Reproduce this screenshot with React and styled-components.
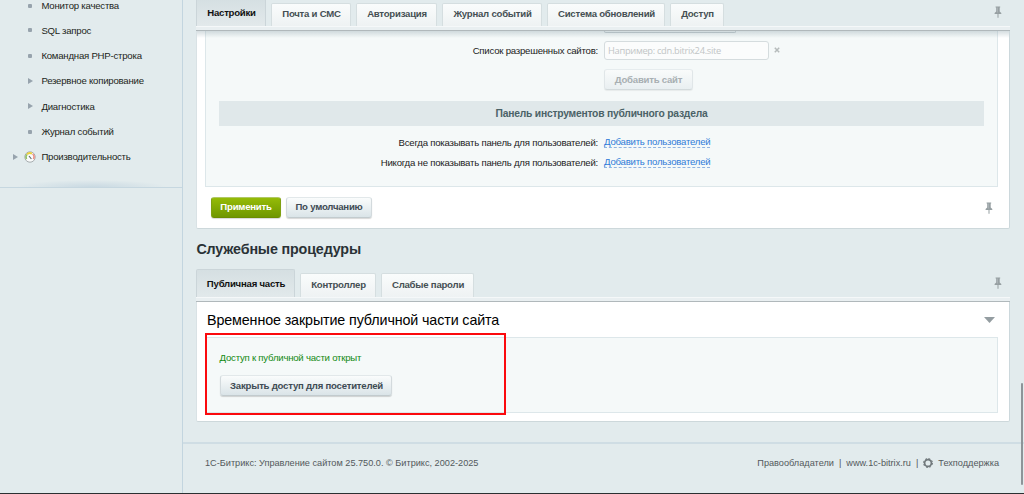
import React from 'react'
import styled, { createGlobalStyle } from 'styled-components'

const menu = [
  { text: 'Монитор качества', mark: 'dot' },
  { text: 'SQL запрос', mark: 'dot' },
  { text: 'Командная PHP-строка', mark: 'dot' },
  { text: 'Резервное копирование', mark: 'arrow' },
  { text: 'Диагностика', mark: 'arrow' },
  { text: 'Журнал событий', mark: 'dot' },
]

const settingsTabs = [
  { text: 'Настройки', width: 70, active: true },
  { text: 'Почта и СМС', width: 80 },
  { text: 'Авторизация', width: 81 },
  { text: 'Журнал событий', width: 100 },
  { text: 'Система обновлений', width: 118 },
  { text: 'Доступ', width: 54 },
]

const serviceTabs = [
  { text: 'Публичная часть', width: 99, active: true },
  { text: 'Контроллер', width: 76 },
  { text: 'Слабые пароли', width: 93 },
]

const Pin = () => (
  <svg width="8" height="13" viewBox="0 0 8 13">
    <path d="M1.6 .5h4.6v1H5.7v4l1.6 1.5v1H.6V7l1.6-1.5v-4h-.6z" fill="#969fa2" />
    <path d="M3 1.5h1v5H3z" fill="#a9b1b4" />
    <path d="M3.5 8h1v3.7h-1z" fill="#969fa2" />
  </svg>
)

const Gauge = () => (
  <svg width="12" height="12" viewBox="0 0 12 12">
    <circle cx="6" cy="6" r="5.2" fill="#fafbfb" stroke="#a5abae" strokeWidth="1" />
    <path d="M2.6 8A3.9 3.9 0 0 1 3 3.4" fill="none" stroke="#8fbf62" strokeWidth="1.5" />
    <path d="M3 3.4A4 4 0 0 1 8 2.6" fill="none" stroke="#ecd23e" strokeWidth="2" />
    <path d="M8.6 3A4 4 0 0 1 9.4 8" fill="none" stroke="#ee8f86" strokeWidth="1.6" />
    <path d="M5 5 7.4 8" stroke="#59646a" strokeWidth="1.1" />
  </svg>
)

const Gear = () => (
  <svg width="10" height="10" viewBox="0 0 10 10">
    <circle cx="5" cy="5" r="3.4" fill="none" stroke="#71797c" strokeWidth="1.7" />
    <circle cx="5" cy="5" r="4.5" fill="none" stroke="#71797c" strokeWidth="1" strokeDasharray="1.9 1.63" />
  </svg>
)

const Tabs = ({ items, service }) => (
  <TabBar $service={service}>
    {items.map((tab) => (
      <Tab key={tab.text} $width={tab.width} $active={tab.active} $service={service}>
        {tab.text}
      </Tab>
    ))}
    <PinSlot>
      <Pin />
    </PinSlot>
  </TabBar>
)

const App = () => (
  <Page>
    <GlobalStyle />
    <Sidebar>
      {menu.map((item) => (
        <MenuItem key={item.text}>
          <Mark>{item.mark === 'dot' ? <Dot /> : <Arrow />}</Mark>
          {item.text}
        </MenuItem>
      ))}
      <MenuItem $root>
        <Arrow />
        <Mark $icon>
          <Gauge />
        </Mark>
        Производительность
      </MenuItem>
      <SidebarEnd />
    </Sidebar>

    <Main>
      <Section>
        <Tabs items={settingsTabs} />
        <Band />
        <Panel $height={198}>
          <Shade />
          <Box $height={156}>
            <SelectEdge />
            <Row $height={20} $top={7}>
              <Label>Список разрешенных сайтов:</Label>
              <Input placeholder="Например: cdn.bitrix24.site" />
              <svg width="6" height="6" viewBox="0 0 6 6">
                <path d="M.8.8l4.4 4.4M5.2.8L.8 5.2" stroke="#b5bbbb" strokeWidth="1.5" />
              </svg>
            </Row>
            <Row $height={21} $top={9}>
              <Label />
              <Button $width={89} disabled>
                Добавить сайт
              </Button>
            </Row>
            <GroupTitle>Панель инструментов публичного раздела</GroupTitle>
            <Row $height={20} $top={6}>
              <Label>Всегда показывать панель для пользователей:</Label>
              <Link>Добавить пользователей</Link>
            </Row>
            <Row $height={20}>
              <Label>Никогда не показывать панель для пользователей:</Label>
              <Link>Добавить пользователей</Link>
            </Row>
          </Box>
          <Actions>
            <Button $width={70} $green>
              Применить
            </Button>
            <Button $width={86}>По умолчанию</Button>
            <PinSlot $inner>
              <Pin />
            </PinSlot>
          </Actions>
        </Panel>
      </Section>

      <Title>Служебные процедуры</Title>

      <Section>
        <Tabs items={serviceTabs} service />
        <Band />
        <Panel $height={120}>
          <PanelHead>
            Временное закрытие публичной части сайта
            <svg width="11" height="6" viewBox="0 0 11 6">
              <path d="M0 0h11L5.5 6z" fill="#949da1" />
            </svg>
          </PanelHead>
          <Box $height={76} $framed>
            <Status>Доступ к публичной части открыт</Status>
            <Button $width={172} $left>
              Закрыть доступ для посетителей
            </Button>
            <Highlight />
          </Box>
        </Panel>
      </Section>

      <Footer>
        <span>1С-Битрикс: Управление сайтом 25.750.0. © Битрикс, 2002-2025</span>
        <FooterLinks>
          <span>Правообладатели</span>
          <span>|</span>
          <span>www.1c-bitrix.ru</span>
          <span>|</span>
          <Gear />
          <span>Техподдержка</span>
        </FooterLinks>
      </Footer>
    </Main>
    <Scrollbar />
  </Page>
)

export default App

const GlobalStyle = createGlobalStyle`
  * {
    box-sizing: border-box;
  }
  body {
    margin: 0;
    overflow: hidden;
    font-family: 'Liberation Sans', Arial, sans-serif;
  }
`

const Page = styled.div`
  position: relative;
  display: flex;
  width: 1024px;
  height: 494px;
  overflow: hidden;
  background: #e2ebed;
  border-bottom: 1px solid #2b2f31;
  white-space: nowrap;
`

const Sidebar = styled.div`
  width: 183px;
  flex-shrink: 0;
  border-right: 1px solid #c3d5df;
`

const MenuItem = styled.div`
  display: flex;
  align-items: center;
  height: 25.3px;
  padding-left: ${({ $root }) => ($root ? '13px' : '27px')};
  font-size: 9.6px;
  letter-spacing: -0.22px;
  color: #1c1f20;
  &:first-child {
    height: 18px;
    margin-top: -3.5px;
    margin-bottom: 3.2px;
  }
`

const Mark = styled.span`
  display: flex;
  width: 14.4px;
  padding-left: 1px;
  ${({ $icon }) => $icon && `
    width: 17.4px;
    margin-left: 6px;
    padding-left: 0;
  `}
`

const Dot = styled.i`
  width: 4px;
  height: 4px;
  border-radius: 1px;
  background: #97a3ad;
`

const Arrow = styled.i`
  border-left: 5px solid #97a3ad;
  border-top: 3px solid transparent;
  border-bottom: 3px solid transparent;
`

const SidebarEnd = styled.div`
  height: 19px;
  border-bottom: 1px solid #c6d7e0;
  background: radial-gradient(ellipse 75px 7px at 92px 100%, #c9d9e2, transparent);
`

const Main = styled.div`
  flex: 1;
  display: flex;
  flex-direction: column;
`

const Section = styled.div`
  width: 814px;
  margin-left: 13px;
`

const TabBar = styled.div`
  display: flex;
  align-items: flex-end;
  gap: 5px;
  height: ${({ $service }) => ($service ? '28px' : '26px')};
`

const Tab = styled.div`
  display: flex;
  align-items: center;
  justify-content: center;
  width: ${({ $width }) => $width}px;
  height: ${({ $active, $service }) => ($active ? 28 : $service ? 24 : 23)}px;
  flex-shrink: 0;
  padding-left: 1px;
  padding-bottom: ${({ $active, $service }) => ($active ? 0 : $service ? 2 : 3)}px;
  border: 1px solid ${({ $active }) => ($active ? '#cbd5d9' : '#d5dee0')};
  border-bottom: 0;
  border-radius: 2px 2px 0 0;
  background: ${({ $active }) => ($active
    ? 'linear-gradient(#d5dfe2, #e2e9eb)'
    : 'linear-gradient(#fafcfc, #eef2f3)')};
  font-size: 9.6px;
  letter-spacing: -0.23px;
  font-weight: 700;
  color: ${({ $active }) => ($active ? '#111' : '#454f53')};
`

const PinSlot = styled.span`
  display: flex;
  margin-left: auto;
  margin-right: ${({ $inner }) => ($inner ? 16 : 8)}px;
  align-self: ${({ $inner }) => ($inner ? 'center' : 'flex-end')};
  padding-top: ${({ $inner }) => ($inner ? 3 : 0)}px;
  padding-bottom: ${({ $inner }) => ($inner ? 0 : 7)}px;
`

const Band = styled.div`
  height: 5px;
  background: #e9eff1;
  border-top: 1px solid #f5f8f9;
  border-bottom: 1px solid #b0b8bb;
`

const Panel = styled.div`
  position: relative;
  height: ${({ $height }) => $height}px;
  padding: 0 11px 0 8px;
  background: #fff;
  border-left: 1px solid #d9e2e5;
  border-right: 1px solid #ccd8dc;
  border-bottom: 1px solid #cdd8db;
  border-radius: 0 0 2px 2px;
`

const Shade = styled.div`
  position: absolute;
  z-index: 1;
  left: 0;
  right: 0;
  top: 0;
  height: 7px;
  background: linear-gradient(rgba(150, 170, 178, 0.4), rgba(150, 170, 178, 0));
`

const Box = styled.div`
  position: relative;
  height: ${({ $height }) => $height}px;
  padding: 0 13px;
  background: #f5f9f9;
  border: 1px solid #dde7ea;
  ${({ $framed }) => !$framed && 'border-top: 0;'}
`

const SelectEdge = styled.div`
  width: 132px;
  height: 2px;
  margin-left: 385px;
  border: 1px solid #bfc8cb;
  border-top: 0;
  border-radius: 0 0 3px 3px;
`

const Row = styled.div`
  display: flex;
  align-items: center;
  height: ${({ $height }) => $height}px;
  margin-top: ${({ $top }) => $top || 0}px;
`

const Label = styled.label`
  width: 379px;
  margin-right: 6px;
  flex-shrink: 0;
  text-align: right;
  font-size: 9.6px;
  letter-spacing: -0.22px;
  line-height: 11px;
  color: #222;
`

const Input = styled.input`
  width: 165px;
  height: 19px;
  margin-right: 5px;
  padding: 0 3px;
  border: 1px solid #d5dcde;
  border-radius: 3px;
  outline: 0;
  background: #fbfcfc;
  font-family: 'Open Sans', sans-serif;
  font-size: 9.3px;
  letter-spacing: -0.3px;
  &::placeholder {
    color: #c1c5c6;
  }
`

const Button = styled.button`
  width: ${({ $width }) => $width}px;
  height: 21px;
  flex-shrink: 0;
  padding: 0;
  border: 1px solid;
  border-color: #e2e8ea #d3dadd #c2cbce;
  border-radius: 3px;
  background: linear-gradient(#fafcfc, #dae4e8);
  box-shadow: 0 1px 1px rgba(0, 0, 0, 0.16);
  font-family: inherit;
  font-size: 9.6px;
  letter-spacing: -0.23px;
  font-weight: 700;
  line-height: 18px;
  color: #3f4b54;
  ${({ $green }) => $green && `
    border-color: #b0c865 #7fa012 #6b8d00;
    background: linear-gradient(#95bb07, #6f9700);
    color: #fff;
  `}
  ${({ $left }) => $left && `
    margin-left: 1px;
    padding-left: 1px;
    line-height: 19px;
  `}
  &:disabled {
    border-color: #e6ecee #e0e6e8 #d3dadc;
    background: linear-gradient(#f9fbfb, #e9eff1);
    box-shadow: 0 1px 1px rgba(0, 0, 0, 0.06);
    color: #a8afb2;
  }
`

const GroupTitle = styled.div`
  height: 25px;
  margin-top: 11px;
  background: #e0e8ea;
  text-align: center;
  font-size: 10.3px;
  letter-spacing: -0.22px;
  font-weight: 700;
  line-height: 25px;
  color: #4b6267;
`

const Link = styled.a`
  margin-top: 1px;
  border-bottom: 1px dashed #8fb3e2;
  font-size: 9.6px;
  letter-spacing: -0.22px;
  line-height: 10px;
  color: #2f7bd8;
`

const Actions = styled.div`
  display: flex;
  align-items: center;
  gap: 5px;
  height: 40px;
  padding-left: 6px;
  margin-right: -11px;
`

const Title = styled.h1`
  height: 40px;
  margin: 0 0 0 13.4px;
  font-size: 14.3px;
  letter-spacing: -0.15px;
  line-height: 41px;
  color: #2a3236;
`

const PanelHead = styled.div`
  display: flex;
  align-items: center;
  justify-content: space-between;
  height: 35px;
  padding: 0 3px 0 2px;
  font-size: 14.3px;
  letter-spacing: -0.12px;
  color: #000;
`

const Status = styled.div`
  height: 37px;
  padding-left: 0.6px;
  line-height: 40px;
  font-size: 9.6px;
  letter-spacing: -0.22px;
  color: #128a12;
`

const Highlight = styled.div`
  position: absolute;
  left: -1px;
  top: -5px;
  width: 301px;
  height: 82px;
  border: 2px solid #fb0a0e;
`

const Footer = styled.div`
  display: flex;
  align-items: center;
  justify-content: space-between;
  height: 40px;
  margin-top: 20px;
  padding: 0 25px 0 22px;
  border-top: 2px solid #cfdde4;
  font-size: 9.16px;
  color: #53595c;
`

const FooterLinks = styled.div`
  display: flex;
  align-items: center;
  gap: 5px;
`

const Scrollbar = styled.div`
  position: absolute;
  right: 1px;
  top: 383px;
  width: 2px;
  height: 102px;
  border-radius: 1px;
  background: #8d9498;
`
